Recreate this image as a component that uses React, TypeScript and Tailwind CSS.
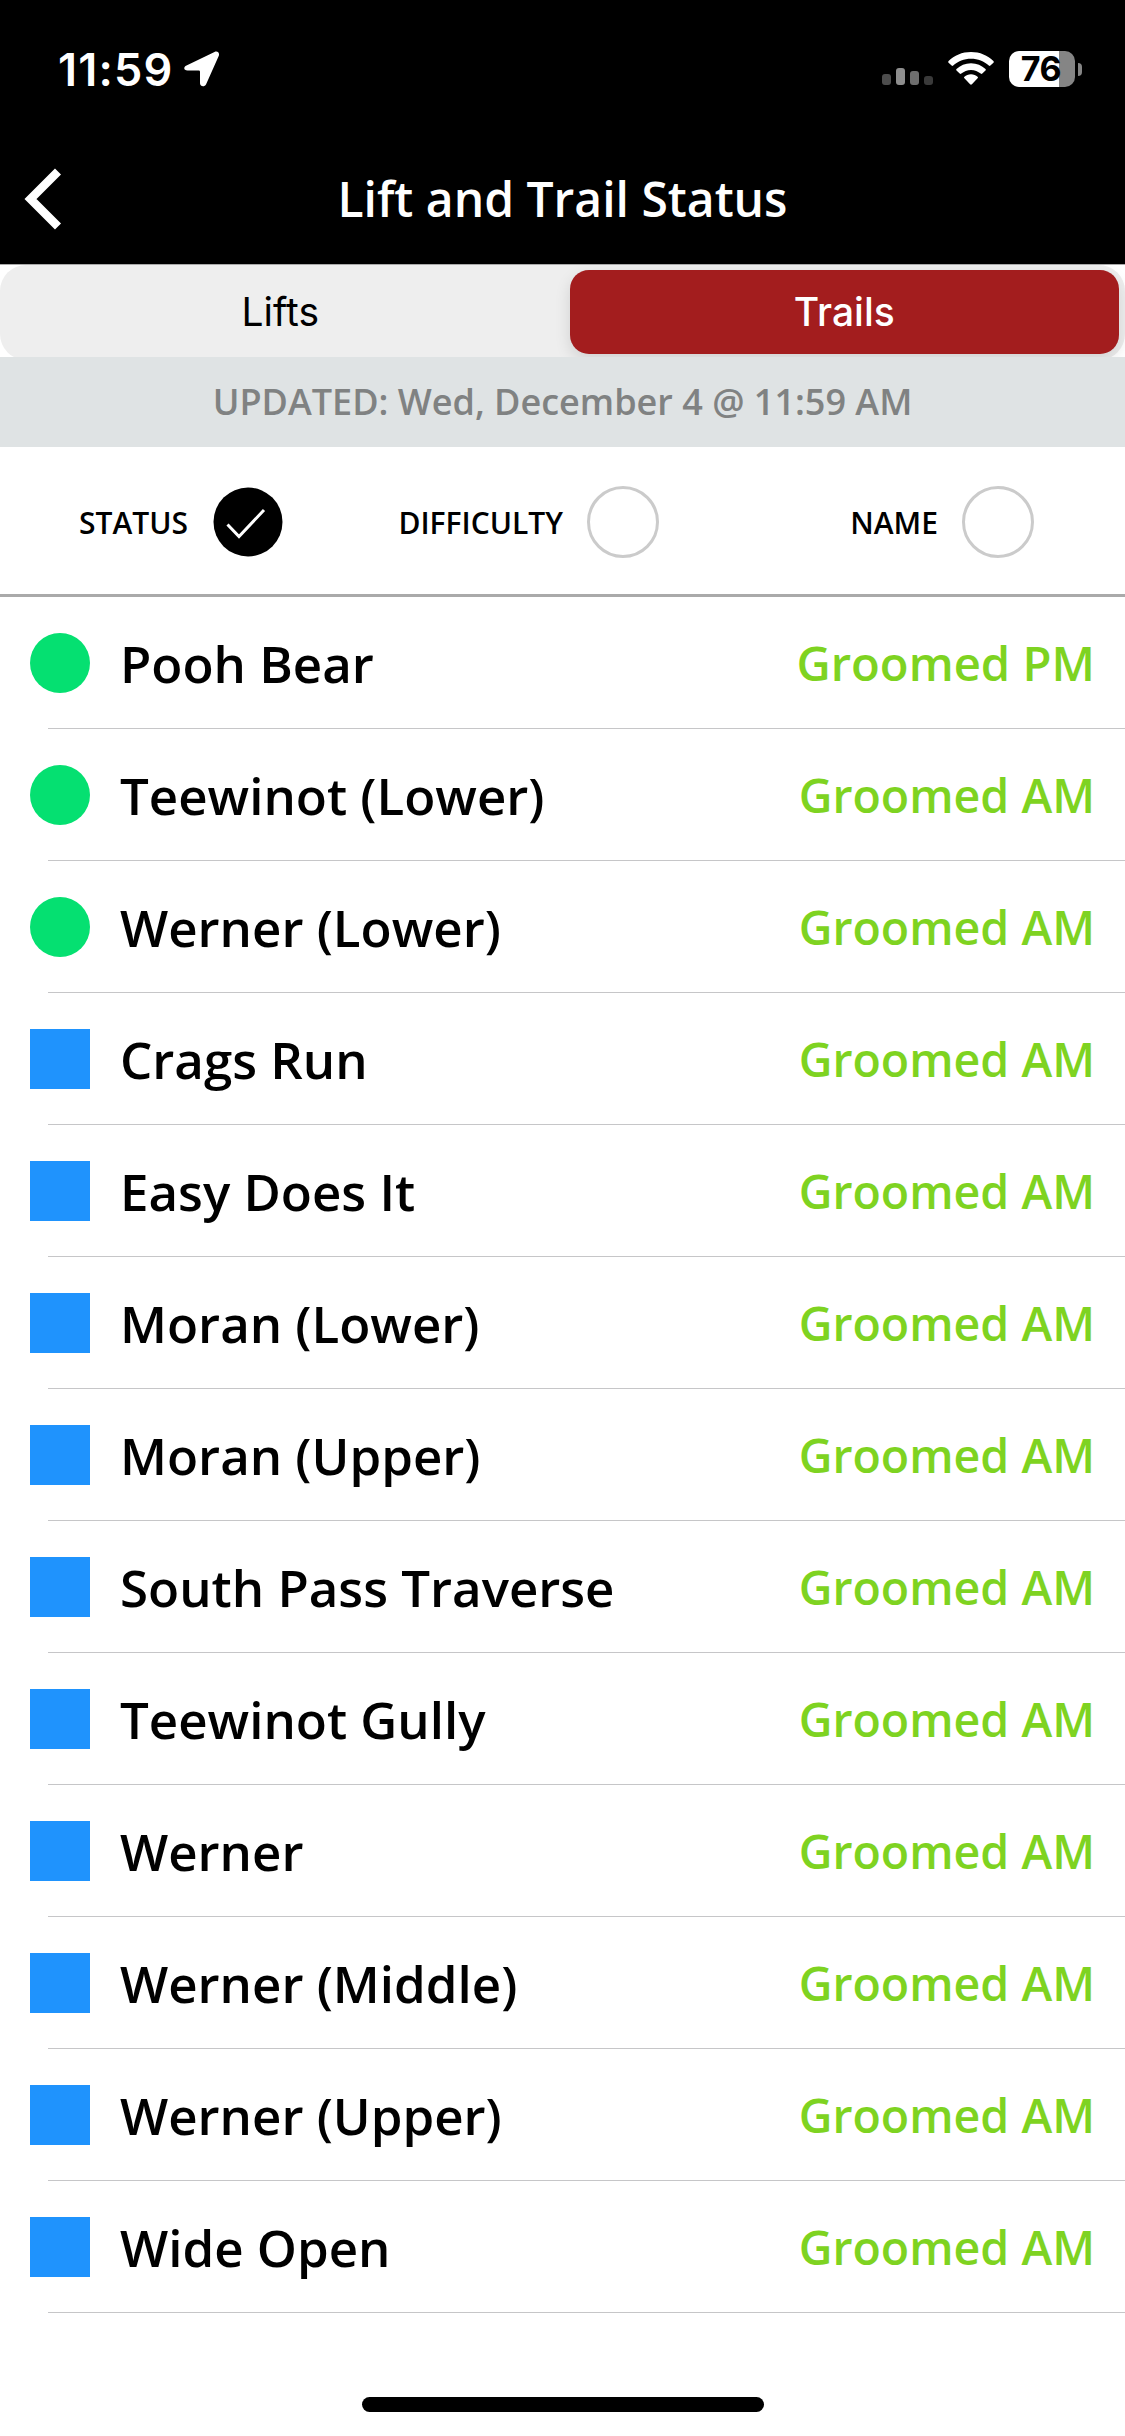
import { useState } from 'react'

type Difficulty = 'easy' | 'intermediate'
type SortKey = 'STATUS' | 'DIFFICULTY' | 'NAME'
type Tab = 'Lifts' | 'Trails'

interface Trail {
  name: string
  difficulty: Difficulty
  status: string
}

const TRAILS: Trail[] = [
  { name: 'Pooh Bear', difficulty: 'easy', status: 'Groomed PM' },
  { name: 'Teewinot (Lower)', difficulty: 'easy', status: 'Groomed AM' },
  { name: 'Werner (Lower)', difficulty: 'easy', status: 'Groomed AM' },
  { name: 'Crags Run', difficulty: 'intermediate', status: 'Groomed AM' },
  { name: 'Easy Does It', difficulty: 'intermediate', status: 'Groomed AM' },
  { name: 'Moran (Lower)', difficulty: 'intermediate', status: 'Groomed AM' },
  { name: 'Moran (Upper)', difficulty: 'intermediate', status: 'Groomed AM' },
  { name: 'South Pass Traverse', difficulty: 'intermediate', status: 'Groomed AM' },
  { name: 'Teewinot Gully', difficulty: 'intermediate', status: 'Groomed AM' },
  { name: 'Werner', difficulty: 'intermediate', status: 'Groomed AM' },
  { name: 'Werner (Middle)', difficulty: 'intermediate', status: 'Groomed AM' },
  { name: 'Werner (Upper)', difficulty: 'intermediate', status: 'Groomed AM' },
  { name: 'Wide Open', difficulty: 'intermediate', status: 'Groomed AM' },
]

const sortKeys: SortKey[] = ['STATUS', 'DIFFICULTY', 'NAME']
const tabs: Tab[] = ['Lifts', 'Trails']

function StatusBar() {
  return (
    <div className="flex h-[138px] items-center justify-between pl-[58px] pr-[43px] text-white">
      <div className="flex items-center gap-[12px]">
        <span className="w-[114px] font-['Inter',sans-serif] text-[45px] font-semibold leading-none tracking-[1.2px]">11:59</span>
        <svg width="36" height="36" viewBox="0 0 36 36" fill="currentColor">
          <path d="M2.500 14.500 30.500 1C33.500-.4 36 2 34.700 5L22 33.500C20.500 36.300 16 35.600 16 32.300V20.800Q16 19.600 14.800 19.600H3.500C-.3 19.600-.9 16.100 2.500 14.500Z" />
        </svg>
      </div>
      <div className="flex items-center">
        <svg className="mr-[14px]" width="52" height="36" viewBox="0 0 52 36">
          <rect x="0" y="23" width="9" height="11" rx="3" fill="#4d4d4d" />
          <rect x="14" y="17" width="9" height="17" rx="3" fill="#8e8e8e" />
          <rect x="28" y="20" width="9" height="14" rx="3" fill="#6e6e6e" />
          <rect x="42" y="25" width="9" height="9" rx="3" fill="#3a3a3a" />
        </svg>
        <svg className="mr-[15px]" width="46" height="36" viewBox="0 0 46 36" fill="currentColor">
          <path d="M23 1C14.200 1 6.200 4.400.6 10Q-.2 10.900.6 11.700L3.600 14.600Q4.400 15.300 5.200 14.600C9.900 10.200 16.100 7.700 23 7.700S36.100 10.200 40.800 14.600Q41.600 15.300 42.400 14.600L45.400 11.700Q46.200 10.900 45.400 10C39.800 4.400 31.800 1 23 1Z" />
          <path d="M23 12.200C17.300 12.200 12.200 14.400 8.500 18Q7.700 18.800 8.500 19.600L11.700 22.600Q12.500 23.300 13.300 22.600C15.900 20.300 19.300 18.900 23 18.900S30.100 20.300 32.700 22.600Q33.500 23.300 34.300 22.600L37.500 19.600Q38.300 18.800 37.500 18C33.800 14.400 28.700 12.200 23 12.200Z" />
          <path d="M23 23.300C20.400 23.300 18.100 24.200 16.400 25.700Q15.500 26.500 16.400 27.300L22.100 33.200Q23 34.100 23.900 33.200L29.600 27.300Q30.500 26.500 29.600 25.700C27.900 24.200 25.600 23.300 23 23.300Z" />
        </svg>
        <div className="flex h-[36px] w-[66px] items-center justify-center rounded-[10px] bg-[linear-gradient(to_right,white_50px,#858585_50px)]">
          <span className="mr-[2px] font-['Inter',sans-serif] text-[34px] font-bold leading-none tracking-[-0.4px] text-black">76</span>
        </div>
        <span className="ml-[3px] h-[13px] w-[4px] rounded-r-full bg-[#858585]" />
      </div>
    </div>
  )
}

function NavBar() {
  return (
    <div className="grid h-[126px] grid-cols-[160px_1fr_160px] items-center pb-[4px] text-white">
      <button className="pl-[24px]">
        <svg width="38" height="62" viewBox="0 0 38 62" fill="none">
          <path d="M34 3.500 6.500 31 34 58.500" stroke="currentColor" strokeWidth="8.500" />
        </svg>
      </button>
      <h1 className="whitespace-nowrap text-center text-[48px] font-semibold leading-none">Lift and Trail Status</h1>
    </div>
  )
}

function SortOption({ label, checked, onClick }: { label: string; checked: boolean; onClick: () => void }) {
  return (
    <button onClick={onClick} className="flex items-center justify-end pr-[91px] pt-[2px]">
      <span className="mr-[24px] pt-[3px] text-[30px] font-semibold leading-none">{label}</span>
      <svg width="72" height="72" viewBox="0 0 72 72" fill="none">
        {checked ? (
          <>
            <circle cx="36" cy="36" r="34.500" fill="black" />
            <path d="M15.500 38.500 27 50.500 52 24" stroke="white" strokeWidth="3" />
          </>
        ) : (
          <circle cx="36" cy="36" r="34.500" stroke="#cbcbcb" strokeWidth="3" />
        )}
      </svg>
    </button>
  )
}

function TrailRow({ trail }: { trail: Trail }) {
  return (
    <li className="h-[132px]">
      <div className="flex h-[131px] items-center pl-[30px] pr-[30px]">
        <span
          className={`size-[60px] shrink-0 ${
            trail.difficulty === 'easy' ? 'rounded-full bg-[#05e071]' : 'bg-[#1f93fd]'
          }`}
        />
        <span className="ml-[30px] flex-1 pt-[1px] text-[51px] font-semibold leading-none text-black">{trail.name}</span>
        <span
          className={`pt-[2px] font-semibold leading-none text-[#7ed321] ${
            trail.status.endsWith('AM') ? 'text-[46.5px]' : 'text-[47.2px]'
          }`}
        >
          {trail.status}
        </span>
      </div>
      <div className="ml-[48px] h-px bg-[#c6c6c8]" />
    </li>
  )
}

export default function App() {
  const [tab, setTab] = useState<Tab>('Trails')
  const [sortKey, setSortKey] = useState<SortKey>('STATUS')

  return (
    <div className="flex h-[2436px] w-[1125px] flex-col overflow-hidden bg-white font-['Open_Sans',sans-serif]">
      <header className="h-[265px] shrink-0 border-b border-[#a9a9a9] bg-black">
        <StatusBar />
        <NavBar />
      </header>

      <div className="h-[92px] shrink-0 overflow-hidden">
        <div className="grid h-[95px] grid-cols-2 rounded-[26px] bg-[#eeeeee] px-[6px] pb-[6px] pt-[5px]">
          {tabs.map((t) => (
            <button
              key={t}
              onClick={() => setTab(t)}
              className={`rounded-[19px] pb-px font-['Inter',sans-serif] text-[39px] leading-none ${
                tab === t
                  ? 'ml-[7px] bg-[#a31d1e] font-medium text-white shadow-[0_6px_16px_rgba(0,0,0,0.12)]'
                  : 'mr-[8px] text-black'
              }`}
            >
              {t}
            </button>
          ))}
        </div>
      </div>

      <div className="flex h-[90px] shrink-0 items-center justify-center bg-[#dfe3e4] text-[36px] font-semibold leading-none text-[#808282]">
        UPDATED: Wed, December 4 @ 11:59 AM
      </div>

      <div className="grid h-[150px] shrink-0 grid-cols-3 border-b-[3px] border-[#aaaaaa]">
        {sortKeys.map((key) => (
          <SortOption key={key} label={key} checked={sortKey === key} onClick={() => setSortKey(key)} />
        ))}
      </div>

      <ul>
        {TRAILS.map((trail) => (
          <TrailRow key={trail.name} trail={trail} />
        ))}
      </ul>

      <div className="mx-auto mb-[24px] mt-auto h-[15px] w-[402px] rounded-full bg-black" />
    </div>
  )
}
